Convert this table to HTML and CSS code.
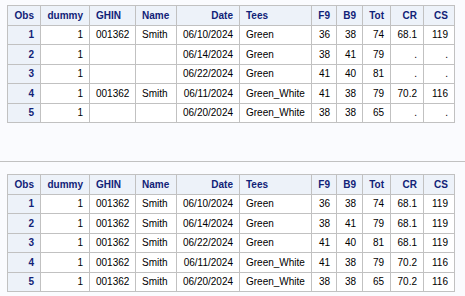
FILE: index.html
```html
<!DOCTYPE html>
<html lang="en">

<head>
    <meta charset="UTF-8">
    <title>Golf Scores</title>
    <link rel="stylesheet" href="styles.css">
</head>

<body>
    <div class="output">
        <table class="table">
            <colgroup>
                <col class="c-obs"><col class="c-dummy"><col class="c-ghin"><col class="c-name"><col class="c-date">
                <col class="c-tees"><col class="c-f9"><col class="c-b9"><col class="c-tot"><col class="c-cr"><col class="c-cs">
            </colgroup>
            <thead>
                <tr>
                    <th class="r">Obs</th><th class="r">dummy</th><th>GHIN</th><th>Name</th><th class="r">Date</th>
                    <th>Tees</th><th class="r">F9</th><th class="r">B9</th><th class="r">Tot</th><th class="r">CR</th><th class="r">CS</th>
                </tr>
            </thead>
            <tbody>
                <tr><th class="r">1</th><td class="r">1</td><td>001362</td><td>Smith</td><td class="r">06/10/2024</td><td>Green</td><td class="r">36</td><td class="r">38</td><td class="r">74</td><td class="r">68.1</td><td class="r">119</td></tr>
                <tr><th class="r">2</th><td class="r">1</td><td></td><td></td><td class="r">06/14/2024</td><td>Green</td><td class="r">38</td><td class="r">41</td><td class="r">79</td><td class="r">.</td><td class="r">.</td></tr>
                <tr><th class="r">3</th><td class="r">1</td><td></td><td></td><td class="r">06/22/2024</td><td>Green</td><td class="r">41</td><td class="r">40</td><td class="r">81</td><td class="r">.</td><td class="r">.</td></tr>
                <tr><th class="r">4</th><td class="r">1</td><td>001362</td><td>Smith</td><td class="r">06/11/2024</td><td>Green_White</td><td class="r">41</td><td class="r">38</td><td class="r">79</td><td class="r">70.2</td><td class="r">116</td></tr>
                <tr><th class="r">5</th><td class="r">1</td><td></td><td></td><td class="r">06/20/2024</td><td>Green_White</td><td class="r">38</td><td class="r">38</td><td class="r">65</td><td class="r">.</td><td class="r">.</td></tr>
            </tbody>
        </table>
    </div>

    <hr class="divider">

    <div class="output">
        <table class="table">
            <colgroup>
                <col class="c-obs"><col class="c-dummy"><col class="c-ghin"><col class="c-name"><col class="c-date">
                <col class="c-tees"><col class="c-f9"><col class="c-b9"><col class="c-tot"><col class="c-cr"><col class="c-cs">
            </colgroup>
            <thead>
                <tr>
                    <th class="r">Obs</th><th class="r">dummy</th><th>GHIN</th><th>Name</th><th class="r">Date</th>
                    <th>Tees</th><th class="r">F9</th><th class="r">B9</th><th class="r">Tot</th><th class="r">CR</th><th class="r">CS</th>
                </tr>
            </thead>
            <tbody>
                <tr><th class="r">1</th><td class="r">1</td><td>001362</td><td>Smith</td><td class="r">06/10/2024</td><td>Green</td><td class="r">36</td><td class="r">38</td><td class="r">74</td><td class="r">68.1</td><td class="r">119</td></tr>
                <tr><th class="r">2</th><td class="r">1</td><td>001362</td><td>Smith</td><td class="r">06/14/2024</td><td>Green</td><td class="r">38</td><td class="r">41</td><td class="r">79</td><td class="r">68.1</td><td class="r">119</td></tr>
                <tr><th class="r">3</th><td class="r">1</td><td>001362</td><td>Smith</td><td class="r">06/22/2024</td><td>Green</td><td class="r">41</td><td class="r">40</td><td class="r">81</td><td class="r">68.1</td><td class="r">119</td></tr>
                <tr><th class="r">4</th><td class="r">1</td><td>001362</td><td>Smith</td><td class="r">06/11/2024</td><td>Green_White</td><td class="r">41</td><td class="r">38</td><td class="r">79</td><td class="r">70.2</td><td class="r">116</td></tr>
                <tr><th class="r">5</th><td class="r">1</td><td>001362</td><td>Smith</td><td class="r">06/20/2024</td><td>Green_White</td><td class="r">38</td><td class="r">38</td><td class="r">65</td><td class="r">70.2</td><td class="r">116</td></tr>
            </tbody>
        </table>
    </div>
</body>

</html>
```

FILE: styles.css
```css
* {
    margin: 0;
    padding: 0;
    box-sizing: border-box;
}

body {
    font-family: 'Liberation Sans', Arial, sans-serif;
    font-size: 10px;
    background-color: #fafbfe;
    color: #000;
}

.output {
    padding: 5px 7px 0;
}

.table {
    border-collapse: collapse;
    table-layout: fixed;
    width: 447px;
    background-color: #fff;
}

.c-obs { width: 33px; }
.c-dummy { width: 49px; }
.c-ghin { width: 46px; }
.c-name { width: 41px; }
.c-date { width: 63px; }
.c-tees { width: 72px; }
.c-f9 { width: 25px; }
.c-b9 { width: 26px; }
.c-tot { width: 28px; }
.c-cr { width: 33px; }
.c-cs { width: 31px; }

.table th,
.table td {
    border: 1px solid #c1c1c1;
    padding: 3px 6px;
    height: 19.5px;
    text-align: left;
    white-space: nowrap;
    overflow: hidden;
    font-weight: normal;
}

.table th {
    background-color: #edf2f9;
    color: #112277;
    font-weight: bold;
}

.table .r {
    text-align: right;
}

.divider {
    border: none;
    border-top: 1px solid #c1c1c1;
    margin: 38px 0 7px;
}
```
